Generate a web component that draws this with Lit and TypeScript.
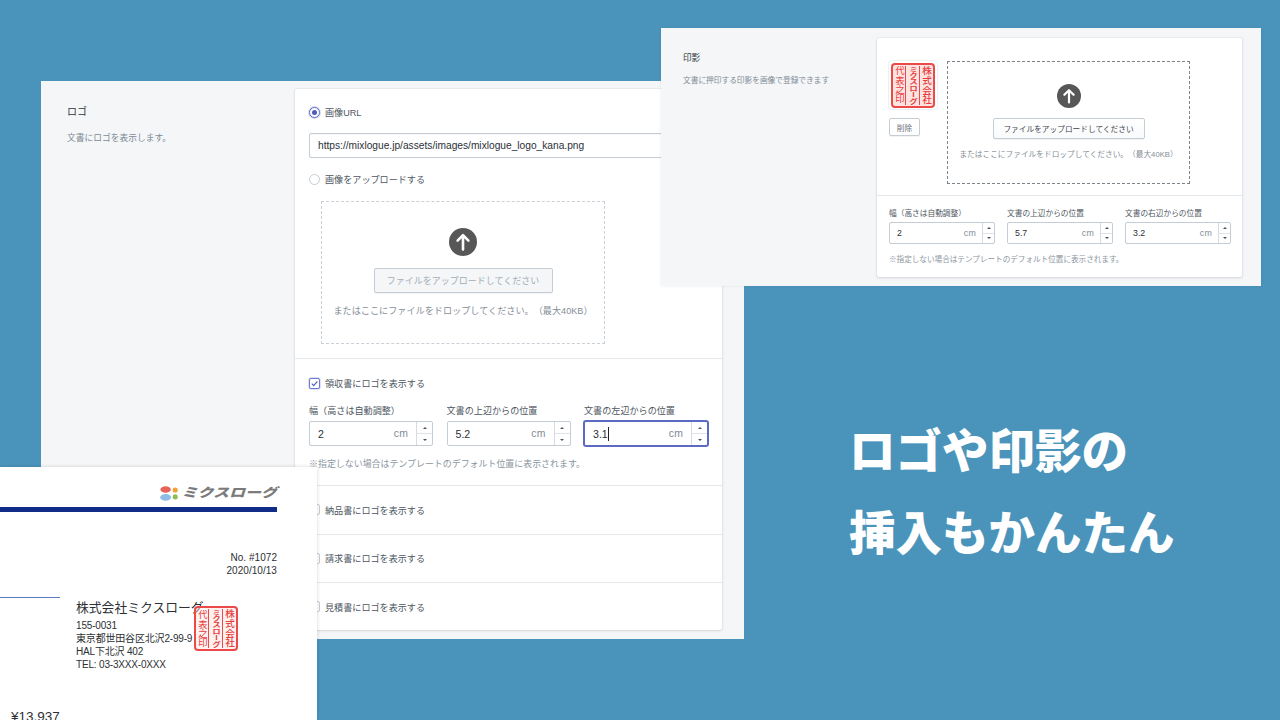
import { LitElement, html, css } from "lit";
import { customElement } from "lit/decorators.js";

const arrow = html`<svg class="arrow" viewBox="0 0 28 28"><circle cx="14" cy="14" r="14" fill="#575757"/><path d="M14 21.5V7.5M8.6 12.6L14 7.2l5.4 5.4" fill="none" stroke="#fff" stroke-width="2.6" stroke-linecap="round" stroke-linejoin="round"/></svg>`;

const seal = html`<div class="seal"><span class="sc left">代表之印</span><span class="sc mid"><span class="midt">ミクスローグ</span></span><span class="sc right">株式会社</span></div>`;

const field = (label: string, value: string, focused = false) => html`
  <div class="field">
    <div class="lab">${label}</div>
    <div class="inp ${focused ? "focus" : ""}">
      <span class="val">${value}${focused ? html`<i class="caret"></i>` : ""}</span>
      <span class="unit">cm</span>
      <span class="step"><b class="up"></b><b class="down"></b></span>
    </div>
  </div>`;

@customElement("app-root")
export class AppRoot extends LitElement {
  static styles = css`
    :host {
      display: block; position: relative; width: 1280px; height: 720px; overflow: hidden;
      background: #4a94bb; color: #454f5b;
      font-family: "Liberation Sans", "Noto Sans CJK JP", sans-serif;
      text-spacing-trim: space-all;
    }
    * { box-sizing: border-box; }
    .win { position: absolute; display: flex; background: #f4f6f8; }
    .main { left: 41px; top: 81px; width: 703px; height: 558px; padding: 8px 22px 0 26px; }
    .stamp { left: 661px; top: 28px; width: 600px; height: 258px; padding: 10px 19px 0 22px; box-shadow: 0 0 3px rgba(0,0,0,.08); }
    .side { flex: none; }
    .main .side { width: 228px; padding-top: 14px; }
    .stamp .side { width: 194px; padding-top: 13px; }
    .side h2 { margin: 0; font-weight: 400; color: #2f3640; }
    .main h2 { font-size: 10px; line-height: 18px; }
    .stamp h2 { font-size: 8.6px; line-height: 14px; }
    .side p { margin: 0; color: #7f8b97; }
    .main .side p { font-size: 8.75px; line-height: 14px; margin-top: 10px; }
    .stamp .side p { font-size: 7.7px; line-height: 12px; margin-top: 10px; }
    .card { background: #fff; border-radius: 2px; box-shadow: 0 0 0 1px rgba(63,63,68,.04), 0 1px 3px rgba(63,63,68,.14); align-self: flex-start; }
    .main .card { width: 427px; }
    .stamp .card { width: 365px; }
    .sec { border-bottom: 1px solid #e4e8ec; }
    .sec:last-child { border-bottom: 0; }
    .main .s1 { padding: 14px 14px 14px; height: 270px; }
    .main .s2 { padding: 15px 14px 0; height: 127px; }
    .row { display: flex; align-items: center; height: 18px; gap: 5px; font-size: 9.1px; color: #4d5661; }
    .rowsec { height: 48.5px; display: flex; align-items: center; padding-left: 14px; }
    .rowsec:last-child { height: 47px; }
    .radio { width: 11px; height: 11px; border-radius: 50%; border: 1px solid #c4cdd5; background: #fff; flex: none; display: flex; align-items: center; justify-content: center; }
    .radio.on { border-color: #5c6ac4; box-shadow: 0 0 0 1px rgba(92,106,196,.25); }
    .radio.on::after { content: ""; width: 5px; height: 5px; border-radius: 50%; background: #4d5ac0; }
    .check { width: 11px; height: 11px; border-radius: 2px; border: 1px solid #c4cdd5; background: #fff; flex: none; display: flex; align-items: center; justify-content: center; }
    .check.on { border-color: #6f7bd0; box-shadow: 0 0 0 .5px rgba(92,106,196,.4); }
    .check svg { width: 9px; height: 9px; }
    .url { width: 400px; height: 25px; margin-top: 12px; margin-bottom: 12px; border: 1px solid #c4cdd5; border-radius: 2px; display: flex; align-items: center; padding-left: 8px; font-size: 10.2px; color: #2b3138; box-shadow: inset 0 1px 0 rgba(0,0,0,.03); }
    .drop { display: flex; flex-direction: column; align-items: center; }
    .main .drop { width: 284px; height: 143px; margin: 13px 0 0 12px; padding-top: 26px; border: 1px dashed #c9d0d7; }
    .stamp .drop { width: 243px; height: 123px; padding-top: 22px; border: 1.2px dashed #7d858c; }
    .arrow { display: block; flex: none; }
    .main .arrow { width: 28px; height: 28px; }
    .stamp .arrow { width: 24px; height: 24px; }
    .btn { display: flex; align-items: center; justify-content: center; border: 1px solid #c4cdd5; border-radius: 2px; background: linear-gradient(#fff, #f9fafb); box-shadow: 0 1px 0 rgba(22,29,37,.05); color: #3d454e; white-space: nowrap; }
    .main .btn { width: 179px; height: 25px; margin-top: 12px; font-size: 9px; color: #a4adb5; background: #f4f6f8; }
    .stamp .drop .btn { width: 152px; height: 21px; margin-top: 10px; font-size: 7.7px; }
    .note { color: #858e97; white-space: nowrap; }
    .main .note { margin-top: 10px; font-size: 9.15px; line-height: 16px; }
    .stamp .note { margin-top: 8px; font-size: 7.7px; line-height: 16px; }
    .fields { display: flex; }
    .main .fields { gap: 13.5px; margin-top: 12px; }
    .stamp .fields { gap: 12px; }
    .lab { color: #4d5661; white-space: nowrap; }
    .main .lab { font-size: 9.1px; line-height: 14px; margin-bottom: 3px; }
    .stamp .lab { font-size: 7.7px; line-height: 14px; margin-bottom: 1px; }
    .inp { display: flex; align-items: center; border: 1px solid #c4cdd5; border-radius: 2px; background: #fff; color: #2b3138; }
    .main .inp { width: 124px; height: 25px; padding-left: 8px; font-size: 10.6px; }
    .stamp .inp { width: 106px; height: 22px; padding-left: 7px; font-size: 8.8px; }
    .inp.focus { border-color: #5c6ac4; box-shadow: 0 0 0 1px #5c6ac4; }
    .val { flex: 1; display: flex; align-items: center; }
    .caret { width: 1px; height: 14px; background: #222; margin-left: 0; }
    .unit { color: #7f8b97; letter-spacing: .2px; }
    .main .unit { margin-right: 8px; font-size: 10.4px; }
    .stamp .unit { margin-right: 6px; font-size: 8.8px; }
    .step { display: flex; flex-direction: column; align-self: stretch; border-left: 1px solid #d5dbe0; flex: none; }
    .main .step { width: 16px; }
    .stamp .step { width: 12px; }
    .step b { flex: 1; display: flex; align-items: center; justify-content: center; }
    .step .up { border-bottom: 1px solid #dfe3e8; }
    .step b::after { content: ""; border-left: 2px solid transparent; border-right: 2px solid transparent; }
    .step .up::after { border-bottom: 2.5px solid #4b535c; }
    .step .down::after { border-top: 2.5px solid #4b535c; }
    .hint { color: #8b95a0; white-space: nowrap; }
    .main .hint { margin-top: 11px; font-size: 8.95px; line-height: 14px; }
    .stamp .hint { margin-top: 9px; font-size: 7.6px; line-height: 14px; }
    .st1 { display: flex; gap: 10px; padding: 23px 12px 0; height: 158px; }
    .st2 { padding: 11px 12px 10px; }
    .thumb { width: 48px; }
    .thumbbox { width: 48px; height: 48px; display: flex; align-items: center; justify-content: center; border-radius: 3px; box-shadow: 0 0 0 1px #eef0f3; margin-bottom: 9px; }
    .del { width: 31px; height: 18px; font-size: 7.7px; color: #6a737d; background: #fff; }
    .seal { width: 44px; height: 45px; display: flex; padding: 1px; border: 2px solid #ea4a48; border-radius: 4px; background: #fde3e1; color: #e83c3a; overflow: hidden; flex: none; }
    .sc { writing-mode: vertical-rl; text-orientation: upright; display: flex; align-items: center; justify-content: center; white-space: nowrap; overflow: hidden; font-weight: 400; height: 100%; }
    .sc.left { width: 11px; font-size: 9.4px; line-height: 11px; }
    .sc.mid { width: 15px; font-size: 6.4px; line-height: 10px; border-left: 1px solid #ea4a48; border-right: 1px solid #ea4a48; }
    .midt { transform: scaleX(1.35); font-weight: 700; }
    .sc.right { flex: 1; font-size: 9.6px; line-height: 12px; font-weight: 500; }
    .doc { position: absolute; left: 0; top: 467px; width: 317px; height: 253px; background: #fff; box-shadow: 0 0 4px rgba(0,0,0,.16); padding: 17px 40px 0 0; color: #2c2f33; }
    .brand { display: flex; justify-content: flex-end; align-items: center; gap: 3px; height: 18px; }
    .brand svg { width: 18px; height: 15px; flex: none; }
    .brandname { display: block; font-size: 16px; line-height: 18px; font-weight: 900; font-style: italic; color: #7b7b7b; white-space: nowrap; transform: scaleY(.78); }
    .bar { height: 5px; background: #112c86; margin-top: 5px; }
    .no { margin-top: 39px; text-align: right; font-size: 10px; line-height: 13px; letter-spacing: .05px; }
    .rule { width: 60px; height: 1px; background: #5a7cc0; margin-top: 20px; }
    .company { position: relative; margin: 1px 0 0 76px; }
    .cname { font-size: 12.8px; line-height: 18px; white-space: nowrap; }
    .addr { font-size: 10px; letter-spacing: -.18px; line-height: 13px; white-space: nowrap; margin-top: 2px; }
    .company .seal { position: absolute; left: 118px; top: 7px; background: rgba(253,227,225,.5); }
    .total { margin: 38px 0 0 11px; font-size: 13.5px; line-height: 16px; }
    .head { position: absolute; left: 849px; top: 407px; color: #fff; font-family: "Noto Sans CJK JP", sans-serif; font-weight: 900; font-size: 46.5px; line-height: 82px; white-space: nowrap; }
  `;

  render() {
    return html`
      <section class="win main">
        <div class="side"><h2>ロゴ</h2><p>文書にロゴを表示します。</p></div>
        <div class="card">
          <div class="sec s1">
            <div class="row"><span class="radio on"></span>画像URL</div>
            <div class="url">https://mixlogue.jp/assets/images/mixlogue_logo_kana.png</div>
            <div class="row"><span class="radio"></span>画像をアップロードする</div>
            <div class="drop">
              ${arrow}
              <div class="btn">ファイルをアップロードしてください</div>
              <div class="note">またはここにファイルをドロップしてください。（最大40KB）</div>
            </div>
          </div>
          <div class="sec s2">
            <div class="row"><span class="check on"><svg viewBox="0 0 10 10"><path d="M2 5.2l2.1 2.2L8.2 2.6" fill="none" stroke="#4d5ac0" stroke-width="1.2"/></svg></span>領収書にロゴを表示する</div>
            <div class="fields">
              ${field("幅（高さは自動調整）", "2")}
              ${field("文書の上辺からの位置", "5.2")}
              ${field("文書の左辺からの位置", "3.1", true)}
            </div>
            <div class="hint">※指定しない場合はテンプレートのデフォルト位置に表示されます。</div>
          </div>
          <div class="sec rowsec"><div class="row"><span class="check"></span>納品書にロゴを表示する</div></div>
          <div class="sec rowsec"><div class="row"><span class="check"></span>請求書にロゴを表示する</div></div>
          <div class="sec rowsec"><div class="row"><span class="check"></span>見積書にロゴを表示する</div></div>
        </div>
      </section>

      <section class="win stamp">
        <div class="side"><h2>印影</h2><p>文書に押印する印影を画像で登録できます</p></div>
        <div class="card">
          <div class="sec st1">
            <div class="thumb">
              <div class="thumbbox">${seal}</div>
              <div class="btn del">削除</div>
            </div>
            <div class="drop">
              ${arrow}
              <div class="btn">ファイルをアップロードしてください</div>
              <div class="note">またはここにファイルをドロップしてください。（最大40KB）</div>
            </div>
          </div>
          <div class="sec st2">
            <div class="fields">
              ${field("幅（高さは自動調整）", "2")}
              ${field("文書の上辺からの位置", "5.7")}
              ${field("文書の右辺からの位置", "3.2")}
            </div>
            <div class="hint">※指定しない場合はテンプレートのデフォルト位置に表示されます。</div>
          </div>
        </div>
      </section>

      <section class="doc">
        <div class="brand">
          <svg viewBox="0 0 18 15"><ellipse cx="5.6" cy="3.5" rx="5.2" ry="3.3" fill="#e8625c"/><ellipse cx="5.6" cy="11.4" rx="5.4" ry="3.4" fill="#8fbde6"/><circle cx="15.2" cy="4" r="2.6" fill="#f0a23a"/><circle cx="15.2" cy="10.8" r="2.6" fill="#8cbf57"/></svg>
          <span class="brandname">ミクスローグ</span>
        </div>
        <div class="bar"></div>
        <div class="no">No. #1072<br />2020/10/13</div>
        <div class="rule"></div>
        <div class="company">
          <div class="cname">株式会社ミクスローグ</div>
          <div class="addr">155-0031<br />東京都世田谷区北沢2-99-9<br />HAL下北沢 402<br />TEL: 03-3XXX-0XXX</div>
          ${seal}
        </div>
        <div class="total">¥13,937</div>
      </section>

      <div class="head">ロゴや印影の<br />挿入もかんたん</div>
    `;
  }
}
